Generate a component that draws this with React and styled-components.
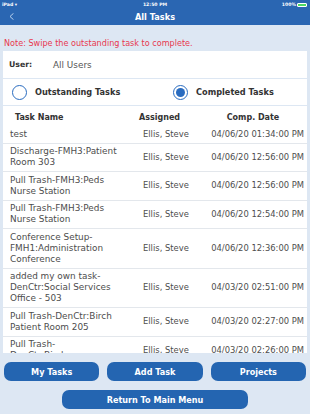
import React from "react";
import styled, { createGlobalStyle } from "styled-components";

const Global = createGlobalStyle`
  html, body { margin: 0; padding: 0; }
  body { font-family: "DejaVu Sans", "Noto Sans", sans-serif; background: #dde7f3; }
  * { box-sizing: border-box; }
`;

const Screen = styled.div`
  width: 310px;
  height: 414px;
  display: flex;
  flex-direction: column;
  background: #dde7f3;
  overflow: hidden;
`;

const Header = styled.div`
  background: #2a66b2;
  height: 25px;
  display: flex;
  flex-direction: column;
  color: #fff;
`;

const StatusBar = styled.div`
  height: 9px;
  display: flex;
  align-items: center;
  justify-content: space-between;
  padding: 0 3px 0 2px;
  font-size: 4.6px;
  font-weight: bold;
  position: relative;
`;

const StatusCenter = styled.span`
  position: absolute;
  left: 50%;
  transform: translateX(-50%);
`;

const StatusRight = styled.span`
  display: flex;
  align-items: center;
  gap: 1px;
`;

const Battery = styled.span`
  width: 10px;
  height: 4px;
  border: 0.5px solid #fff;
  border-radius: 1px;
  background: #4cd964;
`;

const NavBar = styled.div`
  flex: 1;
  display: flex;
  align-items: center;
  justify-content: center;
  position: relative;
  font-size: 8.2px;
  font-weight: bold;
`;

const Back = styled.svg`
  position: absolute;
  left: 9px;
  top: 4px;
`;

const Note = styled.div`
  height: 26px;
  padding: 13px 0 0 4px;
  color: #e8384f;
  font-size: 8.1px;
  line-height: 10px;
  white-space: nowrap;
`;

const Panel = styled.div`
  background: #fff;
  margin: 0 3px 1px;
  height: ${(p) => p.$h}px;
  display: flex;
  align-items: center;
  color: #333;
`;

const UserLabel = styled.span`
  font-weight: bold;
  font-size: 7.8px;
  width: 50px;
  padding-left: 6px;
`;

const UserValue = styled.span`
  color: #555;
  font-size: 8.9px;
`;

const RadioOption = styled.div`
  flex: ${(p) => (p.$grow ? 1 : "none")};
  width: ${(p) => p.$w || "auto"};
  display: flex;
  align-items: center;
  gap: 8px;
  padding-left: ${(p) => p.$pl}px;
  font-weight: bold;
  font-size: 8.2px;
  color: #333;
  white-space: nowrap;
`;

const RadioCircle = styled.span`
  width: 15px;
  height: 15px;
  border-radius: 50%;
  border: 1.3px solid #2a6cc0;
  display: flex;
  align-items: center;
  justify-content: center;
  &::after {
    content: "";
    width: 9px;
    height: 9px;
    border-radius: 50%;
    background: ${(p) => (p.$on ? "#2a6cc0" : "transparent")};
  }
`;

const Table = styled.div`
  flex: 1;
  margin: 0 3px;
  background: #fff;
  overflow: hidden;
`;

const Row = styled.div`
  display: grid;
  grid-template-columns: 130px 72px 1fr;
  align-items: center;
  padding: ${(p) => (p.$head ? "6px 0 3px" : "2.75px 0")};
  border-bottom: ${(p) => (p.$head ? "none" : "1px solid #e3e7ec")};
  line-height: 11px;
  white-space: nowrap;
`;

const HeadCell = styled.div`
  font-weight: bold;
  font-size: 8px;
  color: #333;
  padding-left: ${(p) => p.$pl || 0}px;
  padding-right: ${(p) => p.$pr || 0}px;
  text-align: ${(p) => p.$align || "left"};
`;

const NameCell = styled.div`
  font-size: 8.9px;
  color: #4d4d4d;
  padding-left: 7px;
`;

const AssignCell = styled.div`
  font-size: 8.4px;
  color: #4d4d4d;
  padding-left: 10px;
`;

const DateCell = styled.div`
  font-size: 8.4px;
  color: #4d4d4d;
  text-align: right;
  padding-right: 3px;
`;

const Footer = styled.div`
  padding: 9px 4px 5px;
  display: flex;
  flex-direction: column;
  align-items: center;
  gap: 9px;
`;

const ButtonRow = styled.div`
  display: flex;
  gap: 8px;
  width: 100%;
`;

const Button = styled.button`
  flex: ${(p) => (p.$wide ? "none" : 1)};
  width: ${(p) => (p.$wide ? "186px" : "auto")};
  height: 19px;
  border: none;
  border-radius: 7px;
  background: #2465b1;
  color: #fff;
  font-family: inherit;
  font-weight: bold;
  font-size: 8.1px;
  padding: 0;
`;

const tasks = [
  [["test"], "04/06/20 01:34:00 PM"],
  [["Discharge-FMH3:Patient", "Room 303"], "04/06/20 12:56:00 PM"],
  [["Pull Trash-FMH3:Peds", "Nurse Station"], "04/06/20 12:56:00 PM"],
  [["Pull Trash-FMH3:Peds", "Nurse Station"], "04/06/20 12:54:00 PM"],
  [["Conference Setup-", "FMH1:Administration", "Conference"], "04/06/20 12:36:00 PM"],
  [["added my own task-", "DenCtr:Social Services", "Office - 503"], "04/03/20 02:51:00 PM"],
  [["Pull Trash-DenCtr:Birch", "Patient Room 205"], "04/03/20 02:27:00 PM"],
  [["Pull Trash-", "DenCtr:Birch"], "04/03/20 02:26:00 PM"],
];

export default function App() {
  return (
    <>
      <Global />
      <Screen>
        <Header>
          <StatusBar>
            <span>iPad ▾</span>
            <StatusCenter>12:50 PM</StatusCenter>
            <StatusRight>
              100% <Battery />
            </StatusRight>
          </StatusBar>
          <NavBar>
            <Back width="5" height="7" viewBox="0 0 5 7">
              <polyline points="4.5,0.3 1,3.5 4.5,6.7" fill="none" stroke="#c9dcf3" strokeWidth="0.9" />
            </Back>
            All Tasks
          </NavBar>
        </Header>
        <Note>Note: Swipe the outstanding task to complete.</Note>
        <Panel $h={27}>
          <UserLabel>User:</UserLabel>
          <UserValue>All Users</UserValue>
        </Panel>
        <Panel $h={26}>
          <RadioOption $w="162px" $pl={9}>
            <RadioCircle />
            Outstanding Tasks
          </RadioOption>
          <RadioOption $grow $pl={8}>
            <RadioCircle $on />
            Completed Tasks
          </RadioOption>
        </Panel>
        <Table>
          <Row $head>
            <HeadCell $pl={12}>Task Name</HeadCell>
            <HeadCell $pl={6}>Assigned</HeadCell>
            <HeadCell $align="center" $pr={6}>Comp. Date</HeadCell>
          </Row>
          {tasks.map((t, i) => (
            <Row key={i}>
              <NameCell>
                {t[0].map((line, j) => (
                  <div key={j}>{line}</div>
                ))}
              </NameCell>
              <AssignCell>Ellis, Steve</AssignCell>
              <DateCell>{t[1]}</DateCell>
            </Row>
          ))}
        </Table>
        <Footer>
          <ButtonRow>
            <Button>My Tasks</Button>
            <Button>Add Task</Button>
            <Button>Projects</Button>
          </ButtonRow>
          <Button $wide>Return To Main Menu</Button>
        </Footer>
      </Screen>
    </>
  );
}
